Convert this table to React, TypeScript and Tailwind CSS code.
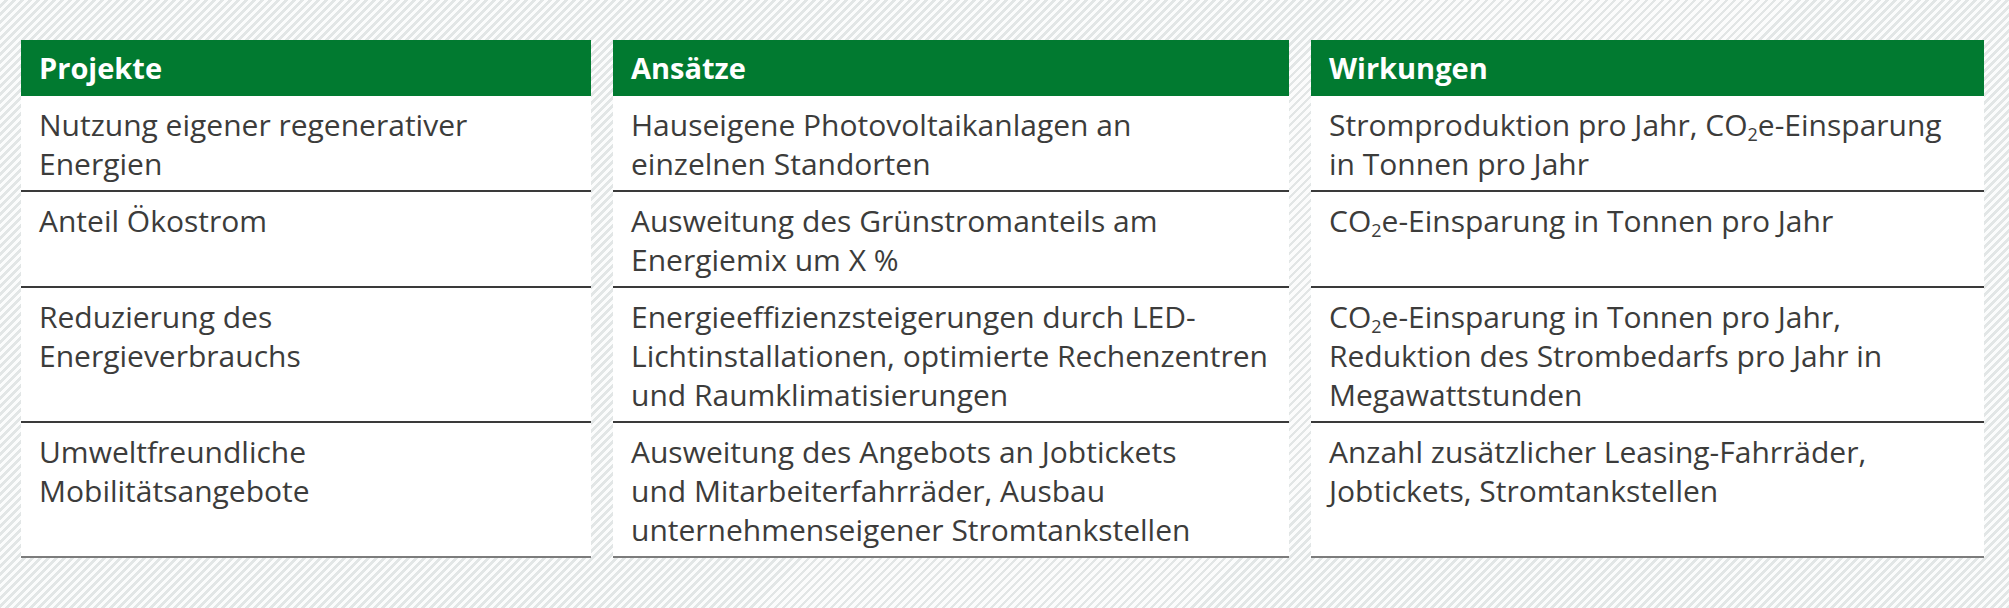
import React from "react"

type Cell = React.ReactNode[]

const CO2 = (
  <>
    CO<sub className="text-[0.6em] -bottom-[0.3em]">2</sub>
  </>
)

const headers = ["Projekte", "Ansätze", "Wirkungen"]

const rows: Cell[][] = [
  [
    ["Nutzung eigener regenerativer", "Energien"],
    ["Hauseigene Photovoltaikanlagen an", "einzelnen Standorten"],
    [<>Stromproduktion pro Jahr, {CO2}e-Einsparung</>, "in Tonnen pro Jahr"],
  ],
  [
    ["Anteil Ökostrom"],
    ["Ausweitung des Grünstromanteils am", "Energiemix um X %"],
    [<>{CO2}e-Einsparung in Tonnen pro Jahr</>],
  ],
  [
    ["Reduzierung des", "Energieverbrauchs"],
    [
      "Energieeffizienzsteigerungen durch LED-",
      "Lichtinstallationen, optimierte Rechenzentren",
      "und Raumklimatisierungen",
    ],
    [<>{CO2}e-Einsparung in Tonnen pro Jahr,</>, "Reduktion des Strombedarfs pro Jahr in", "Megawattstunden"],
  ],
  [
    ["Umweltfreundliche", "Mobilitätsangebote"],
    ["Ausweitung des Angebots an Jobtickets", "und Mitarbeiterfahrräder, Ausbau", "unternehmenseigener Stromtankstellen"],
    ["Anzahl zusätzlicher Leasing-Fahrräder,", "Jobtickets, Stromtankstellen"],
  ],
]

export default function App() {
  return (
    <div
      className="min-h-screen w-full bg-[repeating-linear-gradient(135deg,#fbfcfc_0px,#fbfcfc_3px,#e2e6e6_3px,#e2e6e6_5.66px)] pl-[21px] pt-[40px]"
      style={{ fontFamily: '"Open Sans", "Noto Sans", sans-serif' }}
    >
      <div className="grid grid-cols-[570px_676px_673px] gap-x-[22px]">
        {headers.map((h) => (
          <div key={h} className="h-[56px] bg-[#017a30] px-[18px] text-[29px] font-bold leading-[56px] text-white">
            {h}
          </div>
        ))}
        {rows.map((row, ri) =>
          row.map((cell, ci) => (
            <div
              key={`${ri}-${ci}`}
              className={
                "bg-white px-[18px] pt-[9px] pb-[7px] text-[30px] leading-[39px] text-[#3c3c3b] border-b-2 " +
                (ri === rows.length - 1 ? "border-[#7c7c7c]" : "border-[#3a3a3a]")
              }
            >
              {cell.map((line, li) => (
                <div key={li} className="whitespace-nowrap">
                  {line}
                </div>
              ))}
            </div>
          )),
        )}
      </div>
    </div>
  )
}
